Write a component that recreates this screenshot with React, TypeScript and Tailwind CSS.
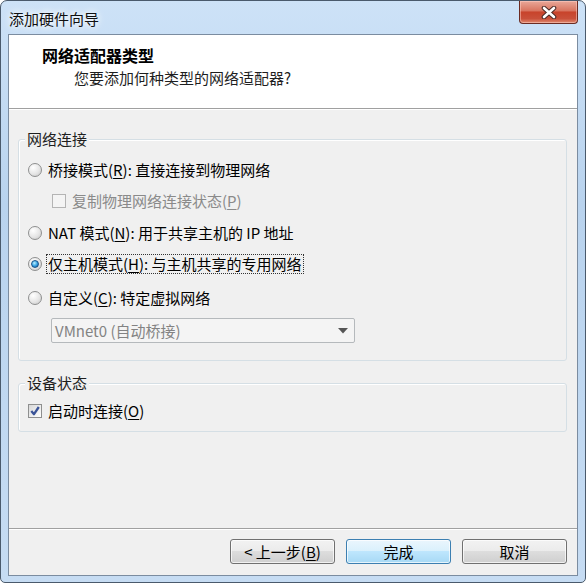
import React from "react";

// Win7 styled "add hardware wizard" dialog
function Radio({ checked = false }: { checked?: boolean }) {
  return (
    <span className="flex h-[14px] w-[14px] shrink-0 items-center justify-center rounded-full border border-[#8e8f8f] bg-[radial-gradient(circle_at_35%_30%,#ffffff,#e6e6e6_55%,#c6c6c6)]">
      {checked && (
        <span className="h-[8px] w-[8px] rounded-full border border-[#1b548a] bg-[radial-gradient(circle_at_40%_35%,#bdf0ff,#3aa6e6_50%,#0c4d8a)]" />
      )}
    </span>
  );
}

function Checkbox({ checked = false, disabled = false }: { checked?: boolean; disabled?: boolean }) {
  return (
    <span
      className={
        disabled
          ? "flex h-[14px] w-[14px] shrink-0 items-center justify-center border border-[#b4b4b4] bg-[#f4f4f4]"
          : "flex h-[14px] w-[14px] shrink-0 items-center justify-center border border-[#8e8f8f] bg-[linear-gradient(135deg,#d8d8d8,#ffffff)]"
      }
    >
      {checked && (
        <svg width="12" height="12" viewBox="0 0 12 12">
          <path d="M2.3 6 L5 9.2 L9.8 2" fill="none" stroke="#3b5498" strokeWidth="2.3" strokeLinejoin="round" />
        </svg>
      )}
    </span>
  );
}

function GroupBox({ label, children, className = "" }: { label: string; children: React.ReactNode; className?: string }) {
  return (
    <div className={"rounded-[3px] border border-[#d5dfe5] pl-[9px] pr-[10px] shadow-[inset_1px_1px_0_#ffffff] " + className}>
      <div className="-ml-[3px] -mt-[11px] w-fit bg-[#f0f0f0] px-[2px] leading-[20px] text-[#1e1e1e]">{label}</div>
      {children}
    </div>
  );
}

function Btn({ children, primary = false }: { children: React.ReactNode; primary?: boolean }) {
  return (
    <div
      className={
        primary
          ? "flex h-[25px] w-[105px] items-center justify-center rounded-[3px] border border-[#3c7fb1] bg-[linear-gradient(180deg,#eaf6fd,#d9f0fc_50%,#bee6fd_50%,#a7d9f5)] leading-none shadow-[inset_0_0_0_1px_rgba(255,255,255,0.7)]"
          : "flex h-[25px] w-[105px] items-center justify-center rounded-[3px] border border-[#707070] bg-[linear-gradient(180deg,#f2f2f2,#ebebeb_50%,#dddddd_50%,#cfcfcf)] leading-none shadow-[inset_0_0_0_1px_rgba(255,255,255,0.7)]"
      }
    >
      {children}
    </div>
  );
}

export default function App() {
  return (
    <div className="flex h-[583px] w-[586px] flex-col overflow-hidden rounded-t-[7px] rounded-b-[5px] border border-[#4a5a6c] bg-[linear-gradient(180deg,#cde2f7,#b9d3ee_35%,#c0d8f1_70%,#c6dcf3)] font-['Microsoft_YaHei','Noto_Sans_CJK_SC',sans-serif] text-[15px] text-black">
      {/* title bar */}
      <div className="flex h-[33px] shrink-0 items-start justify-between">
        <div className="pl-[8px] pt-[8px] leading-[20px] text-[#101010] [text-shadow:0_0_6px_#ffffff,0_0_10px_#ffffff]">添加硬件向导</div>
        <div className="mr-[7px] flex h-[23px] w-[59px] items-center justify-center rounded-b-[4px] border border-t-0 border-[#6b2b22] bg-[linear-gradient(180deg,#e9a899,#d8745f_45%,#c8432b_50%,#c9503a_80%,#e08a6f)] shadow-[inset_0_0_0_1px_rgba(255,210,200,0.5)]">
          <svg width="16" height="13" viewBox="0 0 16 13">
            <path d="M3 2 L13 11 M13 2 L3 11" stroke="#4a2a26" strokeWidth="4.6" strokeLinecap="round" />
            <path d="M3 2 L13 11 M13 2 L3 11" stroke="#ffffff" strokeWidth="2.6" strokeLinecap="round" />
          </svg>
        </div>
      </div>

      {/* client area */}
      <div className="mx-[7px] mb-[6px] flex flex-1 flex-col border border-[#7b8ca0] bg-[#f0f0f0]">
        {/* header */}
        <div className="flex h-[73px] shrink-0 flex-col bg-white pt-[10px]">
          <div className="pl-[33px] text-[16px] font-bold leading-[20px]">网络适配器类型</div>
          <div className="mt-[3px] pl-[65px] leading-[20px] text-[#1e1e1e]">您要添加何种类型的网络适配器?</div>
        </div>
        <div className="h-px shrink-0 bg-[#a0a0a0]" />
        <div className="h-px shrink-0 bg-white" />

        {/* body */}
        <div className="flex flex-1 flex-col pl-[9px] pr-[10px] pt-[29px]">
          <GroupBox label="网络连接" className="pb-[17px]">
            <div className="mt-[11px] flex h-[20px] items-center gap-[6px] leading-[20px]">
              <Radio />
              <span>
                桥接模式(<span className="underline underline-offset-2">R</span>): 直接连接到物理网络
              </span>
            </div>
            <div className="ml-[24px] mt-[11px] flex h-[20px] items-center gap-[6px] leading-[20px] text-[#8a8a8a]">
              <Checkbox disabled />
              <span>
                复制物理网络连接状态(<span className="underline underline-offset-2">P</span>)
              </span>
            </div>
            <div className="mt-[12px] flex h-[20px] items-center gap-[6px] leading-[20px]">
              <Radio />
              <span>
                NAT 模式(<span className="underline underline-offset-2">N</span>): 用于共享主机的 IP 地址
              </span>
            </div>
            <div className="mt-[11px] flex h-[20px] items-center gap-[4px]">
              <Radio checked />
              <span className="border border-dotted border-[#333] px-px leading-[18px]">
                仅主机模式(<span className="underline underline-offset-2">H</span>): 与主机共享的专用网络
              </span>
            </div>
            <div className="mt-[14px] flex h-[20px] items-center gap-[6px] leading-[20px]">
              <Radio />
              <span>
                自定义(<span className="underline underline-offset-2">C</span>): 特定虚拟网络
              </span>
            </div>
            <div className="ml-[23px] mt-[10px] flex h-[25px] w-[304px] items-center justify-between rounded-[2px] border border-[#b5b9bc] bg-[#f4f4f4] pl-[3px] pr-[6px] text-[#838383]">
              <span className="leading-[20px]">VMnet0 (自动桥接)</span>
              <svg width="10" height="6" viewBox="0 0 10 6">
                <path d="M0 0 H10 L5 5.5 Z" fill="#555555" />
              </svg>
            </div>
          </GroupBox>

          <GroupBox label="设备状态" className="mt-[22px] pb-[10px]">
            <div className="mt-[8px] flex h-[20px] items-center gap-[6px] leading-[20px]">
              <Checkbox checked />
              <span>
                启动时连接(<span className="underline underline-offset-2">O</span>)
              </span>
            </div>
          </GroupBox>
        </div>

        {/* footer */}
        <div className="h-px shrink-0 bg-[#a0a0a0]" />
        <div className="h-px shrink-0 bg-white" />
        <div className="flex shrink-0 justify-end gap-[11px] pb-[11px] pr-[10px] pt-[9px]">
          <Btn>
            &lt; 上一步(<span className="underline underline-offset-2">B</span>)
          </Btn>
          <Btn primary>完成</Btn>
          <Btn>取消</Btn>
        </div>
      </div>
    </div>
  );
}
